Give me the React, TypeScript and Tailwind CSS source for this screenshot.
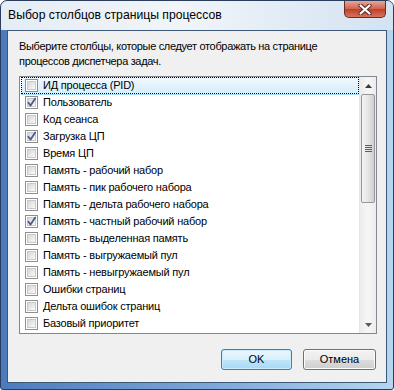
const columns = [
  { label: "ИД процесса (PID)", checked: false },
  { label: "Пользователь", checked: true },
  { label: "Код сеанса", checked: false },
  { label: "Загрузка ЦП", checked: true },
  { label: "Время ЦП", checked: false },
  { label: "Память - рабочий набор", checked: false },
  { label: "Память - пик рабочего набора", checked: false },
  { label: "Память - дельта рабочего набора", checked: false },
  { label: "Память - частный рабочий набор", checked: true },
  { label: "Память - выделенная память", checked: false },
  { label: "Память - выгружаемый пул", checked: false },
  { label: "Память - невыгружаемый пул", checked: false },
  { label: "Ошибки страниц", checked: false },
  { label: "Дельта ошибок страниц", checked: false },
  { label: "Базовый приоритет", checked: false },
];

function CheckBox({ checked }: { checked: boolean }) {
  return (
    <span className="relative flex h-[13px] w-[13px] shrink-0 items-center justify-center border border-[#8e8f8f] bg-white">
      <span className="h-[9px] w-[9px] border border-[#c9c9c9] bg-[linear-gradient(135deg,#d6d6d6,#fafafa)]" />
      {checked && (
        <svg
          className="absolute left-[0px] top-[0px] h-[11px] w-[11px]"
          viewBox="0 0 11 11"
          fill="none"
        >
          <path
            d="M2.4 5.8 L4.6 8.6 L9.2 1.6"
            stroke="#4a5b8c"
            strokeWidth="1.8"
            strokeLinecap="round"
            strokeLinejoin="round"
          />
        </svg>
      )}
    </span>
  );
}

function ScrollBar() {
  return (
    <div className="flex w-[17px] shrink-0 flex-col border-l border-[#e6e6e6] bg-[linear-gradient(to_right,#ececec,#f6f6f6_50%,#ececec)]">
      {/* up */}
      <div className="flex h-[17px] items-center justify-center">
        <svg width="7" height="4" viewBox="0 0 7 4">
          <path d="M3.5 0 L7 4 L0 4 Z" fill="#3a3a3a" />
        </svg>
      </div>
      {/* thumb */}
      <div className="mx-[1px] flex h-[109px] items-center justify-center rounded-[2px] border border-[#979797] bg-[linear-gradient(to_right,#f4f4f4,#e6e6e6_50%,#cfcfcf)]">
        <div className="flex flex-col gap-[1px]">
          <span className="h-[1px] w-[7px] bg-[#5e5e5e]" />
          <span className="h-[1px] w-[7px] bg-[#5e5e5e]" />
          <span className="h-[1px] w-[7px] bg-[#5e5e5e]" />
          <span className="h-[1px] w-[7px] bg-[#5e5e5e]" />
        </div>
      </div>
      <div className="flex-1" />
      {/* down */}
      <div className="flex h-[17px] items-center justify-center">
        <svg width="7" height="4" viewBox="0 0 7 4">
          <path d="M0 0 L7 0 L3.5 4 Z" fill="#5a5a5a" />
        </svg>
      </div>
    </div>
  );
}

export default function App() {
  return (
    <div className="h-[390px] w-[394px] bg-white font-['Liberation_Sans',Arial,sans-serif] text-black">
      {/* WINDOW FRAME */}
      <div className="flex h-full w-full flex-col overflow-hidden rounded-t-[7px] rounded-b-[3px] border border-[#2b3d5c] bg-[linear-gradient(to_right,#4a7bbd,#7ea8da_55%,#b4d6f1)]">
        {/* TITLE BAR */}
        <div className="flex h-[29px] shrink-0 items-start bg-[linear-gradient(to_right,#e4ecf5,#f1f5f9_45%,#d3e3f2)]">
          <div className="pl-[7px] pt-[7px] text-[12.2px] leading-[15px] text-black">
            Выбор столбцов страницы процессов
          </div>
          <div className="ml-auto mr-[7px] flex h-[17px] w-[42px] items-center justify-center rounded-b-[5px] border border-t-0 border-[#6b2a22] bg-[linear-gradient(to_bottom,#e7a697,#d0644f_48%,#bf3f2a_52%,#d9735c)]">
            <svg width="14" height="11" viewBox="0 0 14 11">
              <path
                d="M2.5 1.5 L11.5 9.5 M11.5 1.5 L2.5 9.5"
                stroke="#5b2a24"
                strokeWidth="4.2"
                strokeLinecap="round"
              />
              <path
                d="M2.5 1.5 L11.5 9.5 M11.5 1.5 L2.5 9.5"
                stroke="#ffffff"
                strokeWidth="2.2"
                strokeLinecap="round"
              />
            </svg>
          </div>
        </div>

        {/* CLIENT AREA */}
        <div className="mx-[6px] mb-[6px] flex flex-1 flex-col border border-[#3d5778] bg-[#f0f0f0] pl-[11px] pr-[9px] pt-[8px]">
          <p className="text-[11px] leading-[15px] tracking-[-0.33px]">
            Выберите столбцы, которые следует отображать на странице
            <br />
            процессов диспетчера задач.
          </p>

          {/* LIST */}
          <div className="mt-[7px] flex h-[258px] border border-[#828790] bg-white">
            <div className="flex flex-1 flex-col pl-[1px]">
              {columns.map((c, i) => (
                <div
                  key={c.label}
                  className={
                    i === 0
                      ? "flex h-[17px] items-center gap-[5px] border border-dotted border-black bg-[linear-gradient(to_bottom,#f1f8fd,#d5eefc)] pl-[3px] shadow-[0_1px_0_#9fdcf7]"
                      : "flex h-[17px] items-center gap-[5px] pl-[4px]"
                  }
                >
                  <CheckBox checked={c.checked} />
                  <span className="whitespace-nowrap text-[11px] leading-[15px] tracking-[-0.2px]">
                    {c.label}
                  </span>
                </div>
              ))}
            </div>
            <ScrollBar />
          </div>

          {/* BUTTONS */}
          <div className="mt-[15px] flex justify-end gap-[11px] pr-[1px]">
            <button className="flex h-[21px] w-[71px] items-center justify-center rounded-[3px] border border-[#3c7fb1] bg-[linear-gradient(to_bottom,#eaf6fd,#d9f0fc_50%,#bee6fd_50%,#a7d9f5)] text-[11px] shadow-[inset_0_0_0_1px_#c9ebfb]">
              OK
            </button>
            <button className="flex h-[21px] w-[73px] items-center justify-center rounded-[3px] border border-[#707070] bg-[linear-gradient(to_bottom,#f2f2f2,#ebebeb_50%,#dddddd_50%,#cfcfcf)] text-[11px] shadow-[inset_0_0_0_1px_#fcfcfc]">
              Отмена
            </button>
          </div>
        </div>
      </div>
    </div>
  );
}
